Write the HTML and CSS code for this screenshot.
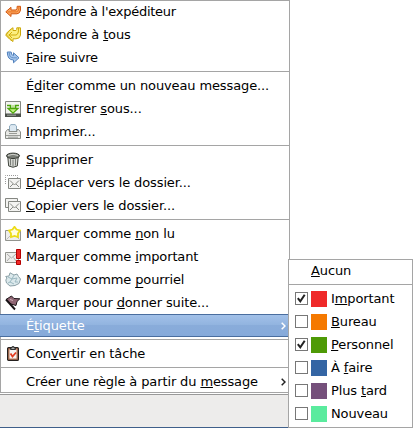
FILE: index.html
```html
<!DOCTYPE html>
<html lang="fr">
<head>
<meta charset="utf-8">
<title>Menu du message</title>
<link rel="stylesheet" href="styles.css">
</head>
<body>
<div class="window">
<ul class="menu">
  <li class="item tighter"><svg class="icon" viewBox="0 0 16 16"><path d="M.8 7.8 6 3.3V6H11Q12.3 5.5 12.2 2.3H15.5V6Q15 9.6 12 9.8H6V12.5Z" fill="#fba761" stroke="#d2560f"/><path d="M2.5 7.9H11.5Q14 7.5 13.9 2.8" fill="none" stroke="#e97420"/></svg><span><u>R</u>épondre à l'expéditeur</span></li>
  <li class="item"><svg class="icon" viewBox="0 0 16 16"><path d="M3.5 4.5 8 .7V3.5H11Q12 3 11.8.8H15.5V8Q15 11.8 11 11.8H8V14.5L5 12.5 1 8.5Z" fill="#fbee80" stroke="#cba80b"/><path d="M.7 7 6.5 1.5M3.5 8H11Q13.7 7.5 13.6 1M7 5 4 8 7 11M1 7.5 6.5 13" fill="none" stroke="#d2ac0a"/></svg><span>Répondre à <u>t</u>ous</span></li>
  <li class="item tight"><svg class="icon" viewBox="0 0 16 16"><path d="M2.3 2H6.2Q6 5.5 8.5 5.5V2.8L14 7.8 8.5 12.8V10Q2.3 10 2.3 2Z" fill="#a4c5ec" stroke="#5181bd"/><path d="M4.3 2.5Q4 7.8 8.5 7.8H12" fill="none" stroke="#6592c8"/></svg><span><u>F</u>aire suivre</span></li>
  <li class="sep"></li>
  <li class="item"><span class="icon"></span><span>É<u>d</u>iter comme un nouveau message...</span></li>
  <li class="item"><svg class="icon" viewBox="0 0 16 16"><path d="M.5.5H15.5V15.5H.5Z" fill="#f4f5f2" stroke="#858882"/><path d="M0 12.5H16V16H0Z" fill="#4b504a"/><path d="M2 14.2H11" stroke="#a5aaa3"/><path d="M2 4.5H5.5V8M14 4.5H10.5V8" fill="none" stroke="#4ca50a" stroke-width="1.6"/><path d="M8 4V8" stroke="#8ad63c"/><path d="M3 7.5H13L8 12.2Z" fill="#c4f383" stroke="#4ca50a" stroke-width="1.3"/></svg><span>Enregistrer <u>s</u>ous...</span></li>
  <li class="item"><svg class="icon" viewBox="0 0 16 16"><path d="M4.5 7V2L6 .6H10L11.5 2V7" fill="#dce8f1" stroke="#8ca9bd"/><path d="M2.5 5.5H4V7.5H12V5.5H13.5L15.5 8V14.5H.5V8Z" fill="#e9eae7" stroke="#898c87"/><path d="M4 9.5H12M1 11.5H15M3 13.2H13" stroke="#999c97"/></svg><span><u>I</u>mprimer...</span></li>
  <li class="sep"></li>
  <li class="item"><svg class="icon" viewBox="0 0 16 16"><path d="M2.8 5 3.7 14Q8 16.5 12.3 14L13.2 5Z" fill="#d5d7d2" stroke="#42463f"/><path d="M5.5 7V13.5M8 7.5V14.5M10.5 7V13.5" stroke="#777b75"/><ellipse cx="8" cy="3.8" rx="6.5" ry="2.7" fill="#7b7f78" stroke="#343832"/><path d="M3 3.5Q8 1 13 3.5" fill="none" stroke="#d4d6d1"/></svg><span><u>S</u>upprimer</span></li>
  <li class="item"><svg class="icon" viewBox="0 0 16 16"><path d="M.5 9V.5H12.5V3" fill="none" stroke="#999" stroke-dasharray="1 1"/><path d="M3.5 3.5H15.5V13.5H3.5Z" fill="#f3f3f1" stroke="#858782"/><path d="M5 5.5 9.5 10 14 5.5M5 12 8 9M14 12 11 9" fill="none" stroke="#888a85"/></svg><span><u>D</u>éplacer vers le dossier...</span></li>
  <li class="item"><svg class="icon" viewBox="0 0 16 16"><path d="M.5.5H12.5V9.5H.5Z" fill="#f3f3f1" stroke="#858782"/><path d="M3.5 3.5H15.5V13.5H3.5Z" fill="#f3f3f1" stroke="#858782"/><path d="M5 5.5 9.5 10 14 5.5M5 12 8 9M14 12 11 9" fill="none" stroke="#888a85"/></svg><span><u>C</u>opier vers le dossier...</span></li>
  <li class="sep"></li>
  <li class="item"><svg class="icon" viewBox="0 0 16 16"><path d="M.5 4.5H15.5V14.5H.5Z" fill="#eeeeec" stroke="#92948f"/><path d="M1.5 13.5 6 9M14.5 13.5 11 10" stroke="#bbb"/><path d="M9.5.8 11.5 3.5 15 4.5 13 7.5 13 11 9.5 10 6 11 6 7.5 4 4.5 7.5 3.5Z" fill="#fffde0" stroke="#eddc16" stroke-width="1.8"/></svg><span>Marquer comme <u>n</u>on lu</span></li>
  <li class="item"><svg class="icon" viewBox="0 0 16 16"><path d="M.5 3.5H13.5V13.5H.5Z" fill="#eeeeec" stroke="#92948f"/><path d="M2 5 6.5 9 11 5M2 12 5 8.5M11 12 8.5 8.5" fill="none" stroke="#aaa"/><path d="M11.5.5H15.5V9.5H11.5ZM11.5 11.5H15.5V15.5H11.5Z" fill="#ef2929" stroke="#b50000"/></svg><span>Marquer comme <u>i</u>mportant</span></li>
  <li class="item"><svg class="icon" viewBox="0 0 16 16"><path d="M.7 4.5 4 4 5 .8 9 3 12 2 13.5 4.5 15.5 7 14 11.5 10 13.5 5 14 1.5 11 .8 8 2 6Z" fill="#dce9ec" stroke="#8ba0a7"/><path d="M3 5 7 7 5 10 9 12M9 3 7 7 12 6 10 10 13 10M3 11 5 10" fill="none" stroke="#9bb8c1"/></svg><span>Marquer comme <u class="low">p</u>ourriel</span></li>
  <li class="item"><svg class="icon" viewBox="0 0 16 16"><path d="M1 4.5 6.5 1 9 3.5 14.8 3.8 12 6.5 11 10.5 6 9Z" fill="#8f6573" stroke="#1f1519"/><path d="M5 4.5 8 5.5" stroke="#d0b1b9"/><path d="M1 4.5 10 14.5" stroke="#171214" stroke-width="1.9"/></svg><span>Marquer pour <u>d</u>onner suite...</span></li>
  <li class="item selected"><span class="icon"></span><span>É<u>t</u>iquette</span><svg class="arrow" viewBox="0 0 5 8"><path d="M.7.7 4 4 .7 7.3"/></svg></li>
  <li class="sep"></li>
  <li class="item"><svg class="icon" viewBox="0 0 16 16"><rect x="2.6" y="1.6" width="10.8" height="12.8" rx="1" fill="#b8795a" stroke="#241f1d" stroke-width="1.2"/><path d="M4.5 3.5H11.5V12.5H4.5Z" fill="#f4f4f2"/><path d="M5.5 3.5V2H7V.7H9V2H10.5V3.5Z" fill="#aaa" stroke="#333"/><path d="M5.5 7.5 7.5 10.5 11 6.5" fill="none" stroke="#e33c20" stroke-width="1.8"/></svg><span>Con<u>v</u>ertir en tâche</span></li>
  <li class="sep"></li>
  <li class="item"><span class="icon"></span><span>Créer une règle à partir du <u>m</u>essage</span><svg class="arrow" viewBox="0 0 5 8"><path d="M.7.7 4 4 .7 7.3"/></svg></li>
</ul>
<div class="panel"></div>
<ul class="menu submenu">
  <li class="item none"><span><u>A</u>ucun</span></li>
  <li class="sep"></li>
  <li class="item"><svg class="check" viewBox="0 0 11 11"><path d="M1.8 5.2 4.3 8.4 8.7 1.8"/></svg><i class="swatch important"></i><span>I<u>m</u>portant</span></li>
  <li class="item"><span class="check"></span><i class="swatch bureau"></i><span><u>B</u>ureau</span></li>
  <li class="item"><svg class="check" viewBox="0 0 11 11"><path d="M1.8 5.2 4.3 8.4 8.7 1.8"/></svg><i class="swatch personnel"></i><span><u>P</u>ersonnel</span></li>
  <li class="item"><span class="check"></span><i class="swatch faire"></i><span>À <u>f</u>aire</span></li>
  <li class="item"><span class="check"></span><i class="swatch tard"></i><span>Plus <u>t</u>ard</span></li>
  <li class="item"><span class="check"></span><i class="swatch nouveau"></i><span>Nouveau</span></li>
</ul>
</div>
</body>
</html>
```
FILE: styles.css
```css
* { box-sizing: border-box; }
body { margin: 0; background: #fff; overflow: hidden; font: 13px/23px "DejaVu Sans", sans-serif; letter-spacing: -.12px; color: #000; }
.window { position: relative; width: 413px; height: 428px; }
.menu { width: 290px; height: 393px; margin: 0; padding: 0; list-style: none; background: #fff; box-shadow: inset 0 0 0 1px #a5a5a5; }
.item { display: flex; align-items: center; height: 23px; padding: 0 5px; white-space: pre; }
.tight { letter-spacing: -.22px; }
.tighter { letter-spacing: -.26px; }
.icon { flex: none; width: 16px; height: 16px; margin-right: 5px; }
.sep { height: 5px; padding-top: 2px; }
.sep::before { content: ""; display: block; height: 1px; background: #a5a5a5; }
u { text-decoration: underline 1px; text-underline-offset: 1px; text-decoration-skip-ink: none; }
.low { text-underline-offset: 3px; }
.selected { color: #fff; background: linear-gradient(#a2c1e9, #91b3df 50%, #89acda 50%, #86aada); border: solid #4a6e9f; border-width: 1px 0; }
.arrow { width: 5px; height: 8px; margin-left: auto; margin-right: -1px; fill: none; stroke: #222; stroke-width: 1.5; }
.selected .arrow { stroke: #fff; }
.panel { width: 290px; height: 34px; margin-top: 1px; background: #edeceb; border-top: 1px solid #999; border-bottom: 1px solid #3f5f8a; }
.submenu { position: absolute; left: 288px; top: 259px; width: 125px; height: 169px; }
.submenu .item { padding-left: 7px; }
.submenu .none { padding-left: 23px; }
.check { flex: none; width: 13px; height: 13px; border: 1px solid #777; fill: none; stroke: #222; stroke-width: 2; }
.swatch { flex: none; width: 16px; height: 16px; margin: 0 4px 0 3px; }
.important { background: #ef2929; }
.bureau { background: #f57900; }
.personnel { background: #4e9a06; }
.faire { background: #3465a4; }
.tard { background: #75507b; }
.nouveau { background: #5aeb9e; }
```
